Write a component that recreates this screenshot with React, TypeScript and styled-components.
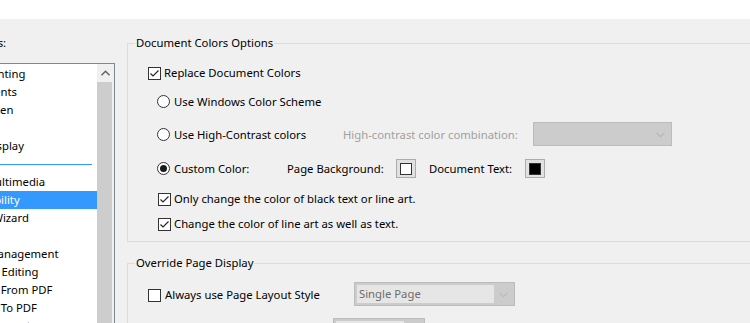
import React from 'react'
import styled, { createGlobalStyle } from 'styled-components'

const categories = [
    { name: 'Commenting' },
    { name: 'Documents' },
    { name: 'Full Screen' },
    { name: 'General' },
    { name: 'Page Display' },
    { sep: true },
    { name: '3D & Multimedia' },
    { name: 'Accessibility', selected: true },
    { name: 'Action Wizard' },
    { name: 'Catalog' },
    { name: 'Color Management' },
    { name: 'Content Editing' },
    { name: 'Convert From PDF' },
    { name: 'Convert To PDF' },
    { name: 'Email Accounts' },
]

const Check = ({ checked }: { checked?: boolean }) => (
    <CheckBox>
        {checked ? (
            <svg width="11" height="11" viewBox="0 0 11 11">
                <polyline points="1.5,5.5 4,8 9.5,2.5" fill="none" stroke="#262626" strokeWidth="1.2" />
            </svg>
        ) : null}
    </CheckBox>
)

const Radio = ({ checked }: { checked?: boolean }) => (
    <RadioCircle>{checked ? <Dot /> : null}</RadioCircle>
)

const Chevron = ({ color }: { color: string }) => (
    <svg width="9" height="6" viewBox="0 0 9 6">
        <polyline points="0.5,0.8 4.5,4.8 8.5,0.8" fill="none" stroke={color} strokeWidth="1" />
    </svg>
)

const App = () => {
    return (
        <Page>
            <GlobalStyle />
            <TopStrip />
            <Body>
                <Sidebar>
                    <SideInner>
                        <CatLabel>Categories:</CatLabel>
                        <ListBox>
                            <Items>
                                {categories.map((c, i) =>
                                    c.sep ? (
                                        <Separator key={i}><SepLine /></Separator>
                                    ) : (
                                        <Item key={i} $selected={!!c.selected}>{c.name}</Item>
                                    )
                                )}
                            </Items>
                            <ScrollBar>
                                <ScrollUp>
                                    <svg width="9" height="6" viewBox="0 0 9 6">
                                        <polyline points="0.5,5.2 4.5,1.2 8.5,5.2" fill="none" stroke="#606060" strokeWidth="1.4" />
                                    </svg>
                                </ScrollUp>
                                <Thumb />
                            </ScrollBar>
                        </ListBox>
                    </SideInner>
                </Sidebar>

                <Main>
                    <GroupBox>
                        <Legend>Document Colors Options</Legend>
                        <Row $top={9} $indent={20}>
                            <Check checked />
                            <Label $gap={3}>Replace Document Colors</Label>
                        </Row>
                        <Row $top={5} $indent={29}>
                            <Radio />
                            <Label $gap={4}>Use Windows Color Scheme</Label>
                        </Row>
                        <Row $top={9} $indent={29}>
                            <Option $width={186}>
                                <Radio />
                                <Label $gap={4}>Use High-Contrast colors</Label>
                            </Option>
                            <FieldLabel $width={190} $dim>High-contrast color combination:</FieldLabel>
                            <Combo $width={139}>
                                <ComboText />
                                <ComboArrow><Chevron color="#a9a9a9" /></ComboArrow>
                            </Combo>
                        </Row>
                        <Row $top={10} $indent={29}>
                            <Option $width={130}>
                                <Radio checked />
                                <Label $gap={4}>Custom Color:</Label>
                            </Option>
                            <FieldLabel $width={109}>Page Background:</FieldLabel>
                            <Swatch><SwatchInner $color="#ffffff" /></Swatch>
                            <FieldLabel $width={96} $left={13}>Document Text:</FieldLabel>
                            <Swatch><SwatchInner $color="#000000" /></Swatch>
                        </Row>
                        <Row $top={6} $indent={30}>
                            <Check checked />
                            <Label $gap={3}>Only change the color of black text or line art.</Label>
                        </Row>
                        <Row $top={1} $indent={30}>
                            <Check checked />
                            <Label $gap={3}>Change the color of line art as well as text.</Label>
                        </Row>
                    </GroupBox>

                    <GroupBox $top={13}>
                        <Legend>Override Page Display</Legend>
                        <Row $top={11} $indent={20}>
                            <Option $width={206}>
                                <Check />
                                <Label $gap={4}>Always use Page Layout Style</Label>
                            </Option>
                            <Combo $width={161}>
                                <ComboText $light>Single Page</ComboText>
                                <ComboArrow><Chevron color="#b0b0b0" /></ComboArrow>
                            </Combo>
                        </Row>
                        <Row $top={12} $indent={20}>
                            <Option $width={185}>
                                <Check />
                                <Label $gap={4}>Always use Zoom Setting</Label>
                            </Option>
                            <Combo $width={92}>
                                <ComboText $light>Fit Width</ComboText>
                                <ComboArrow><Chevron color="#b0b0b0" /></ComboArrow>
                            </Combo>
                        </Row>
                    </GroupBox>
                </Main>
            </Body>
        </Page>
    )
}

export default App

const GlobalStyle = createGlobalStyle`
html, body {
margin: 0;
padding: 0;
background: #f0f0f0;
overflow: hidden;
}
body {
font-family: "Noto Sans", "Segoe UI", sans-serif;
font-size: 11.3px;
color: #000;
}
`

const Page = styled.div`
width: 750px;
height: 323px;
overflow: hidden;
display: flex;
flex-direction: column;
`

const TopStrip = styled.div`
height: 19px;
flex-shrink: 0;
background: #ffffff;
`

const Body = styled.div`
display: flex;
flex: 1;
min-height: 0;
background: #f0f0f0;
`

const Sidebar = styled.div`
width: 115px;
flex-shrink: 0;
overflow: hidden;
`

const SideInner = styled.div`
margin-left: -48px;
padding-top: 16px;
`

const CatLabel = styled.div`
line-height: 16px;
height: 16px;
margin: 0 0 12px -6px;
white-space: nowrap;
`

const ListBox = styled.div`
display: flex;
height: 300px;
border: 1px solid #828790;
background: #ffffff;
`

const Items = styled.div`
flex: 1;
min-width: 0;
padding-top: 1px;
`

const Item = styled.div<{ $selected?: boolean }>`
height: 18px;
line-height: 18px;
padding-left: 3px;
white-space: nowrap;
overflow: hidden;
background: ${p => (p.$selected ? '#3399ff' : 'transparent')};
color: ${p => (p.$selected ? '#ffffff' : '#000000')};
`

const Separator = styled.div`
height: 18px;
box-sizing: border-box;
padding: 9px 5px 0 0;
`

const SepLine = styled.div`
height: 1px;
background: #3399ff;
`

const ScrollBar = styled.div`
width: 17px;
display: flex;
flex-direction: column;
background: #f0f0f0;
`

const ScrollUp = styled.div`
height: 18px;
display: flex;
align-items: center;
justify-content: center;
`

const Thumb = styled.div`
flex: 1;
margin: 0 2px 0 0;
background: #cdcdcd;
`

const Main = styled.div`
flex: 1;
min-width: 0;
overflow: hidden;
padding: 16px 0 0 12px;
`

const GroupBox = styled.fieldset<{ $top?: number }>`
margin: ${p => p.$top || 0}px 0 0 0;
width: 700px;
min-width: 0;
border: 1px solid #dcdcdc;
padding: 0 0 6px 7px;
`

const Legend = styled.legend`
padding: 0 1px;
line-height: 16px;
font-size: inherit;
`

const Row = styled.div<{ $top: number; $indent: number }>`
display: flex;
align-items: center;
height: 24px;
margin-top: ${p => p.$top}px;
margin-left: ${p => p.$indent - 7}px;
white-space: nowrap;
`

const Option = styled.div<{ $width: number }>`
display: flex;
align-items: center;
width: ${p => p.$width}px;
flex-shrink: 0;
`

const Label = styled.span<{ $gap: number }>`
margin-left: ${p => p.$gap}px;
`

const FieldLabel = styled.span<{ $width: number; $dim?: boolean; $left?: number }>`
width: ${p => p.$width}px;
margin-left: ${p => p.$left || 0}px;
flex-shrink: 0;
color: ${p => (p.$dim ? '#a0a0a0' : '#000000')};
`

const CheckBox = styled.span`
width: 13px;
height: 13px;
box-sizing: border-box;
border: 1px solid #333333;
background: #ffffff;
display: inline-flex;
align-items: center;
justify-content: center;
flex-shrink: 0;
margin-top: 2px;
`

const RadioCircle = styled.span`
width: 13px;
height: 13px;
box-sizing: border-box;
border: 1px solid #333333;
border-radius: 50%;
background: #ffffff;
display: inline-flex;
align-items: center;
justify-content: center;
flex-shrink: 0;
margin-top: 1px;
`

const Dot = styled.span`
width: 7px;
height: 7px;
border-radius: 50%;
background: #1a1a1a;
`

const Combo = styled.div<{ $width: number }>`
width: ${p => p.$width}px;
height: 24px;
box-sizing: border-box;
border: 1px solid #bcbcbc;
background: #cccccc;
display: flex;
align-items: stretch;
padding: 2px;
flex-shrink: 0;
`

const ComboText = styled.div<{ $light?: boolean }>`
flex: 1;
background: ${p => (p.$light ? '#e6e6e6' : 'transparent')};
color: #6d6d6d;
line-height: 18px;
padding-left: 2px;
`

const ComboArrow = styled.div`
width: 18px;
display: flex;
align-items: center;
justify-content: center;
padding-top: 2px;
`

const Swatch = styled.div`
width: 20px;
height: 19px;
box-sizing: border-box;
border: 1px solid #adadad;
background: #e1e1e1;
display: flex;
align-items: center;
justify-content: center;
flex-shrink: 0;
margin-top: 1px;
`

const SwatchInner = styled.div<{ $color: string }>`
width: 12px;
height: 12px;
box-sizing: border-box;
border: 1px solid #333333;
background: ${p => p.$color};
`
